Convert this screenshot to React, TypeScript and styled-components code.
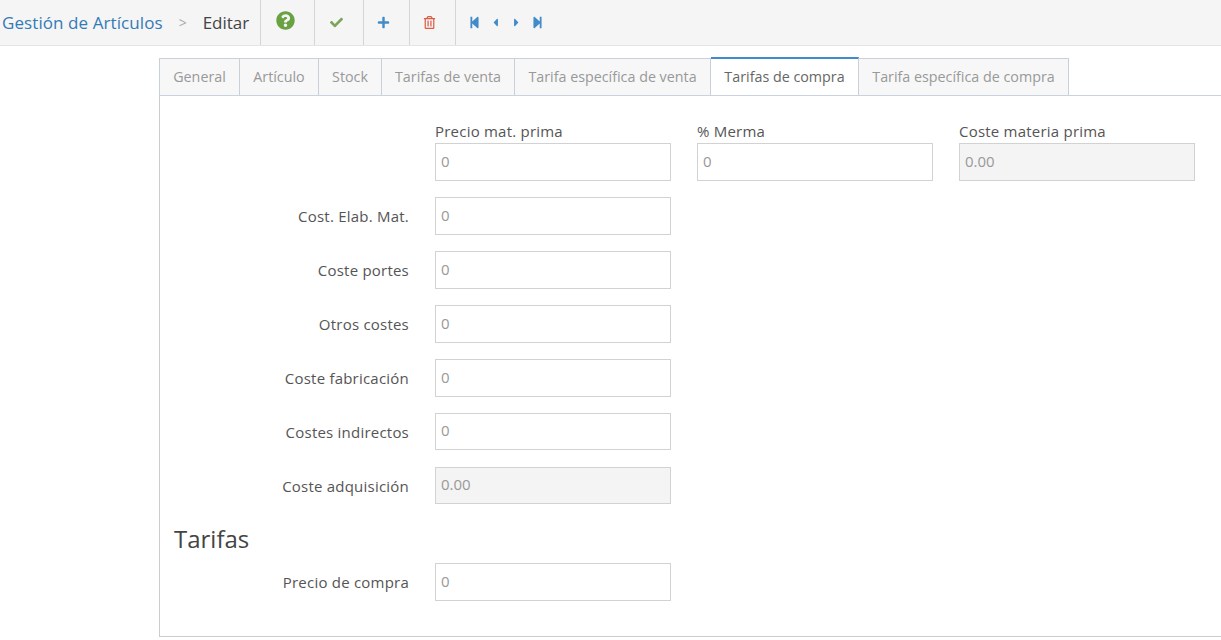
import React from "react";
import styled, { createGlobalStyle } from "styled-components";
import { FaQuestionCircle, FaCheck, FaPlus, FaRegTrashAlt, FaStepBackward, FaStepForward, FaCaretLeft, FaCaretRight } from "react-icons/fa";

const Global = createGlobalStyle`
  html, body { margin: 0; padding: 0; background: #fff; overflow: hidden; }
  body { font-family: "Open Sans", "Liberation Sans", sans-serif; font-size: 14px; color: #444; }
`;

const Page = styled.div`
  width: 1221px;
  height: 640px;
  overflow: hidden;
`;

const Toolbar = styled.header`
  display: flex;
  align-items: stretch;
  height: 45px;
  background: #f5f5f5;
  border-bottom: 1px solid #e4e4e4;
`;

const Breadcrumb = styled.div`
  display: flex;
  align-items: center;
  width: 260px;
  padding: 0 0 1px 2px;
  box-sizing: border-box;
  font-size: 17px;
`;

const Title = styled.span`
  color: #337ab7;
  letter-spacing: 0.08px;
`;

const Sep = styled.span`
  color: #aaa;
  font-size: 14px;
  margin: 0 16px 0 16px;
`;

const Current = styled.span`
  color: #444;
`;

const ToolButton = styled.div<{ $w: number; $c: string; $s: number; $up?: number; $shift?: number }>`
  display: flex;
  align-items: center;
  justify-content: center;
  width: ${(p) => p.$w}px;
  box-sizing: border-box;
  border-left: 1px solid #d5d5d5;
  color: ${(p) => p.$c};
  font-size: ${(p) => p.$s}px;
  padding-bottom: ${(p) => p.$up ?? 0}px;
  padding-right: ${(p) => p.$shift ?? 0}px;
`;

const Pager = styled.div`
  display: flex;
  align-items: center;
  gap: 8px;
  padding: 0 0 0 12px;
  border-left: 1px solid #d5d5d5;
  color: #428bca;
  font-size: 13px;
`;

const Content = styled.main`
  margin: 12px 0 0 159px;
  width: 1100px;
`;

const Tabs = styled.nav`
  display: flex;
  height: 38px;
  box-sizing: border-box;
  border-bottom: 1px solid #c9d3e0;
`;

const Tab = styled.div<{ $w: number; $active?: boolean }>`
  width: ${(p) => p.$w}px;
  box-sizing: border-box;
  height: ${(p) => (p.$active ? 38 : 37)}px;
  margin-top: ${(p) => (p.$active ? -1 : 0)}px;
  display: flex;
  align-items: center;
  justify-content: center;
  white-space: nowrap;
  font-size: 14.3px;
  padding-bottom: 1px;
  color: ${(p) => (p.$active ? "#666" : "#999")};
  background: ${(p) => (p.$active ? "#fff" : "#f7f7f7")};
  border-top: ${(p) => (p.$active ? "2px solid #428bca" : "1px solid #c9d0da")};
  border-right: 1px solid #c9d0da;
  &:first-child { border-left: 1px solid #c9d0da; }
`;

const Panel = styled.section`
  height: 541px;
  box-sizing: border-box;
  border-left: 1px solid #ccc;
  border-bottom: 1px solid #ccc;
  padding: 26px 0 0 0;
`;

const TopRow = styled.div`
  display: grid;
  grid-template-columns: repeat(3, 236px);
  column-gap: 26px;
  padding-left: 275px;
  margin-bottom: 16px;
`;

const Stacked = styled.div`
  display: flex;
  flex-direction: column;
  gap: 2px;
`;

const TopLabel = styled.label`
  font-size: 15px;
  letter-spacing: 0.22px;
  line-height: 19px;
  color: #555;
`;

const Row = styled.div`
  display: flex;
  align-items: center;
  height: 38px;
  margin-bottom: 16px;
`;

const SideLabel = styled.label`
  width: 249px;
  text-align: right;
  margin-right: 26px;
  font-size: 15px;
  letter-spacing: 0.22px;
  color: #555;
`;

const Field = styled.div<{ $off?: boolean; $short?: boolean }>`
  width: 236px;
  height: ${(p) => (p.$short ? 37 : 38)}px;
  align-self: flex-start;
  box-sizing: border-box;
  border: 1px solid #d2d2d2;
  background: ${(p) => (p.$off ? "#f4f4f4" : "#fff")};
  color: #999;
  font-size: 15px;
  line-height: ${(p) => (p.$short ? 32 : 34)}px;
  padding-left: 5px;
`;

const Heading = styled.h3`
  margin: 17px 0 7px 14px;
  font-size: 24px;
  line-height: 34px;
  font-weight: 400;
  color: #444;
`;

const tabs: [string, number, boolean?][] = [
  ["General", 81],
  ["Artículo", 79],
  ["Stock", 63],
  ["Tarifas de venta", 133],
  ["Tarifa específica de venta", 196],
  ["Tarifas de compra", 148, true],
  ["Tarifa específica de compra", 210],
];

const rows: [string, string, boolean?, boolean?][] = [
  ["Cost. Elab. Mat.", "0"],
  ["Coste portes", "0"],
  ["Otros costes", "0"],
  ["Coste fabricación", "0"],
  ["Costes indirectos", "0", false, true],
  ["Coste adquisición", "0.00", true, true],
];

export default function App() {
  return (
    <Page>
      <Global />
      <Toolbar>
        <Breadcrumb>
          <Title>Gestión de Artículos</Title>
          <Sep>&gt;</Sep>
          <Current>Editar</Current>
        </Breadcrumb>
        <ToolButton $w={54} $c="#6aa142" $s={19} $up={5} $shift={4}><FaQuestionCircle /></ToolButton>
        <ToolButton $w={49} $c="#7ca55a" $s={13} $shift={6}><FaCheck /></ToolButton>
        <ToolButton $w={46} $c="#428bca" $s={13} $shift={6}><FaPlus /></ToolButton>
        <ToolButton $w={46} $c="#dd5a43" $s={13} $shift={6}><FaRegTrashAlt /></ToolButton>
        <Pager>
          <FaStepBackward />
          <FaCaretLeft />
          <FaCaretRight />
          <FaStepForward />
        </Pager>
      </Toolbar>
      <Content>
        <Tabs>
          {tabs.map(([t, w, a]) => (
            <Tab key={t} $w={w} $active={a}>{t}</Tab>
          ))}
        </Tabs>
        <Panel>
          <TopRow>
            <Stacked><TopLabel>Precio mat. prima</TopLabel><Field>0</Field></Stacked>
            <Stacked><TopLabel>% Merma</TopLabel><Field>0</Field></Stacked>
            <Stacked><TopLabel>Coste materia prima</TopLabel><Field $off>0.00</Field></Stacked>
          </TopRow>
          {rows.map(([l, v, off, short]) => (
            <Row key={l}>
              <SideLabel>{l}</SideLabel>
              <Field $off={off} $short={short}>{v}</Field>
            </Row>
          ))}
          <Heading>Tarifas</Heading>
          <Row>
            <SideLabel>Precio de compra</SideLabel>
            <Field>0</Field>
          </Row>
        </Panel>
      </Content>
    </Page>
  );
}
